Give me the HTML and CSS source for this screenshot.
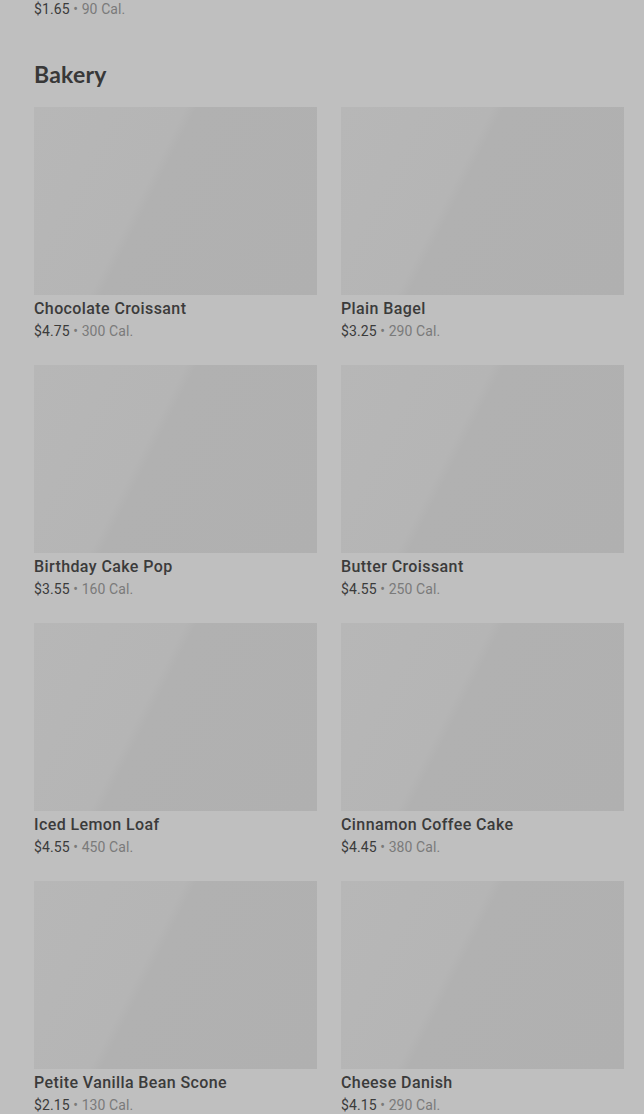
FILE: index.html
```html
<!DOCTYPE html>
<html lang="en">
<head>
    <meta charset="UTF-8">
    <meta name="viewport" content="width=device-width, initial-scale=1.0">
    <title>Menu - Bakery</title>
    <link rel="stylesheet" href="styles.css">
</head>
<body>

<div class="page">
    <p class="meta"><span class="price">$1.65</span> • 90 Cal.</p>

    <section class="category">
        <h2>Bakery</h2>
        <div class="grid">
            <div class="item">
                <div class="thumb"></div>
                <div class="name">Chocolate Croissant</div>
                <p class="meta"><span class="price">$4.75</span> • 300 Cal.</p>
            </div>
            <div class="item">
                <div class="thumb"></div>
                <div class="name">Plain Bagel</div>
                <p class="meta"><span class="price">$3.25</span> • 290 Cal.</p>
            </div>
            <div class="item">
                <div class="thumb"></div>
                <div class="name">Birthday Cake Pop</div>
                <p class="meta"><span class="price">$3.55</span> • 160 Cal.</p>
            </div>
            <div class="item">
                <div class="thumb"></div>
                <div class="name">Butter Croissant</div>
                <p class="meta"><span class="price">$4.55</span> • 250 Cal.</p>
            </div>
            <div class="item">
                <div class="thumb"></div>
                <div class="name">Iced Lemon Loaf</div>
                <p class="meta"><span class="price">$4.55</span> • 450 Cal.</p>
            </div>
            <div class="item">
                <div class="thumb"></div>
                <div class="name">Cinnamon Coffee Cake</div>
                <p class="meta"><span class="price">$4.45</span> • 380 Cal.</p>
            </div>
            <div class="item">
                <div class="thumb"></div>
                <div class="name">Petite Vanilla Bean Scone</div>
                <p class="meta"><span class="price">$2.15</span> • 130 Cal.</p>
            </div>
            <div class="item">
                <div class="thumb"></div>
                <div class="name">Cheese Danish</div>
                <p class="meta"><span class="price">$4.15</span> • 290 Cal.</p>
            </div>
        </div>
    </section>
</div>

</body>
</html>
```

FILE: styles.css
```css
body {
    margin: 0;
    background-color: #bfbfbf;
    font-family: Roboto, "Liberation Sans", sans-serif;
    color: #3b3b3b;
    overflow: hidden;
}

.page {
    padding: 0 20px 0 34px;
}

.meta {
    margin: 0;
    font-size: 14px;
    line-height: 18px;
    letter-spacing: 0.1px;
    color: #7a7a7a;
}

.meta .price {
    color: #3b3b3b;
}

.category h2 {
    margin: 42px 0 19px;
    font-family: Lato, "Liberation Sans", sans-serif;
    font-size: 23px;
    line-height: 28px;
    font-weight: 700;
    letter-spacing: 0.2px;
    color: #383838;
}

.grid {
    display: grid;
    grid-template-columns: 1fr 1fr;
    column-gap: 24px;
    row-gap: 26px;
}

.thumb {
    height: 188px;
    background: linear-gradient(117deg, #b7b7b7 0%, #b5b5b5 40%, #b1b1b1 43%, #b0b0b0 100%);
}

.name {
    margin-top: 3px;
    font-size: 16px;
    line-height: 22px;
    font-weight: 500;
    letter-spacing: 0.4px;
}

.item .meta {
    margin-top: 3px;
    line-height: 16px;
}
```
